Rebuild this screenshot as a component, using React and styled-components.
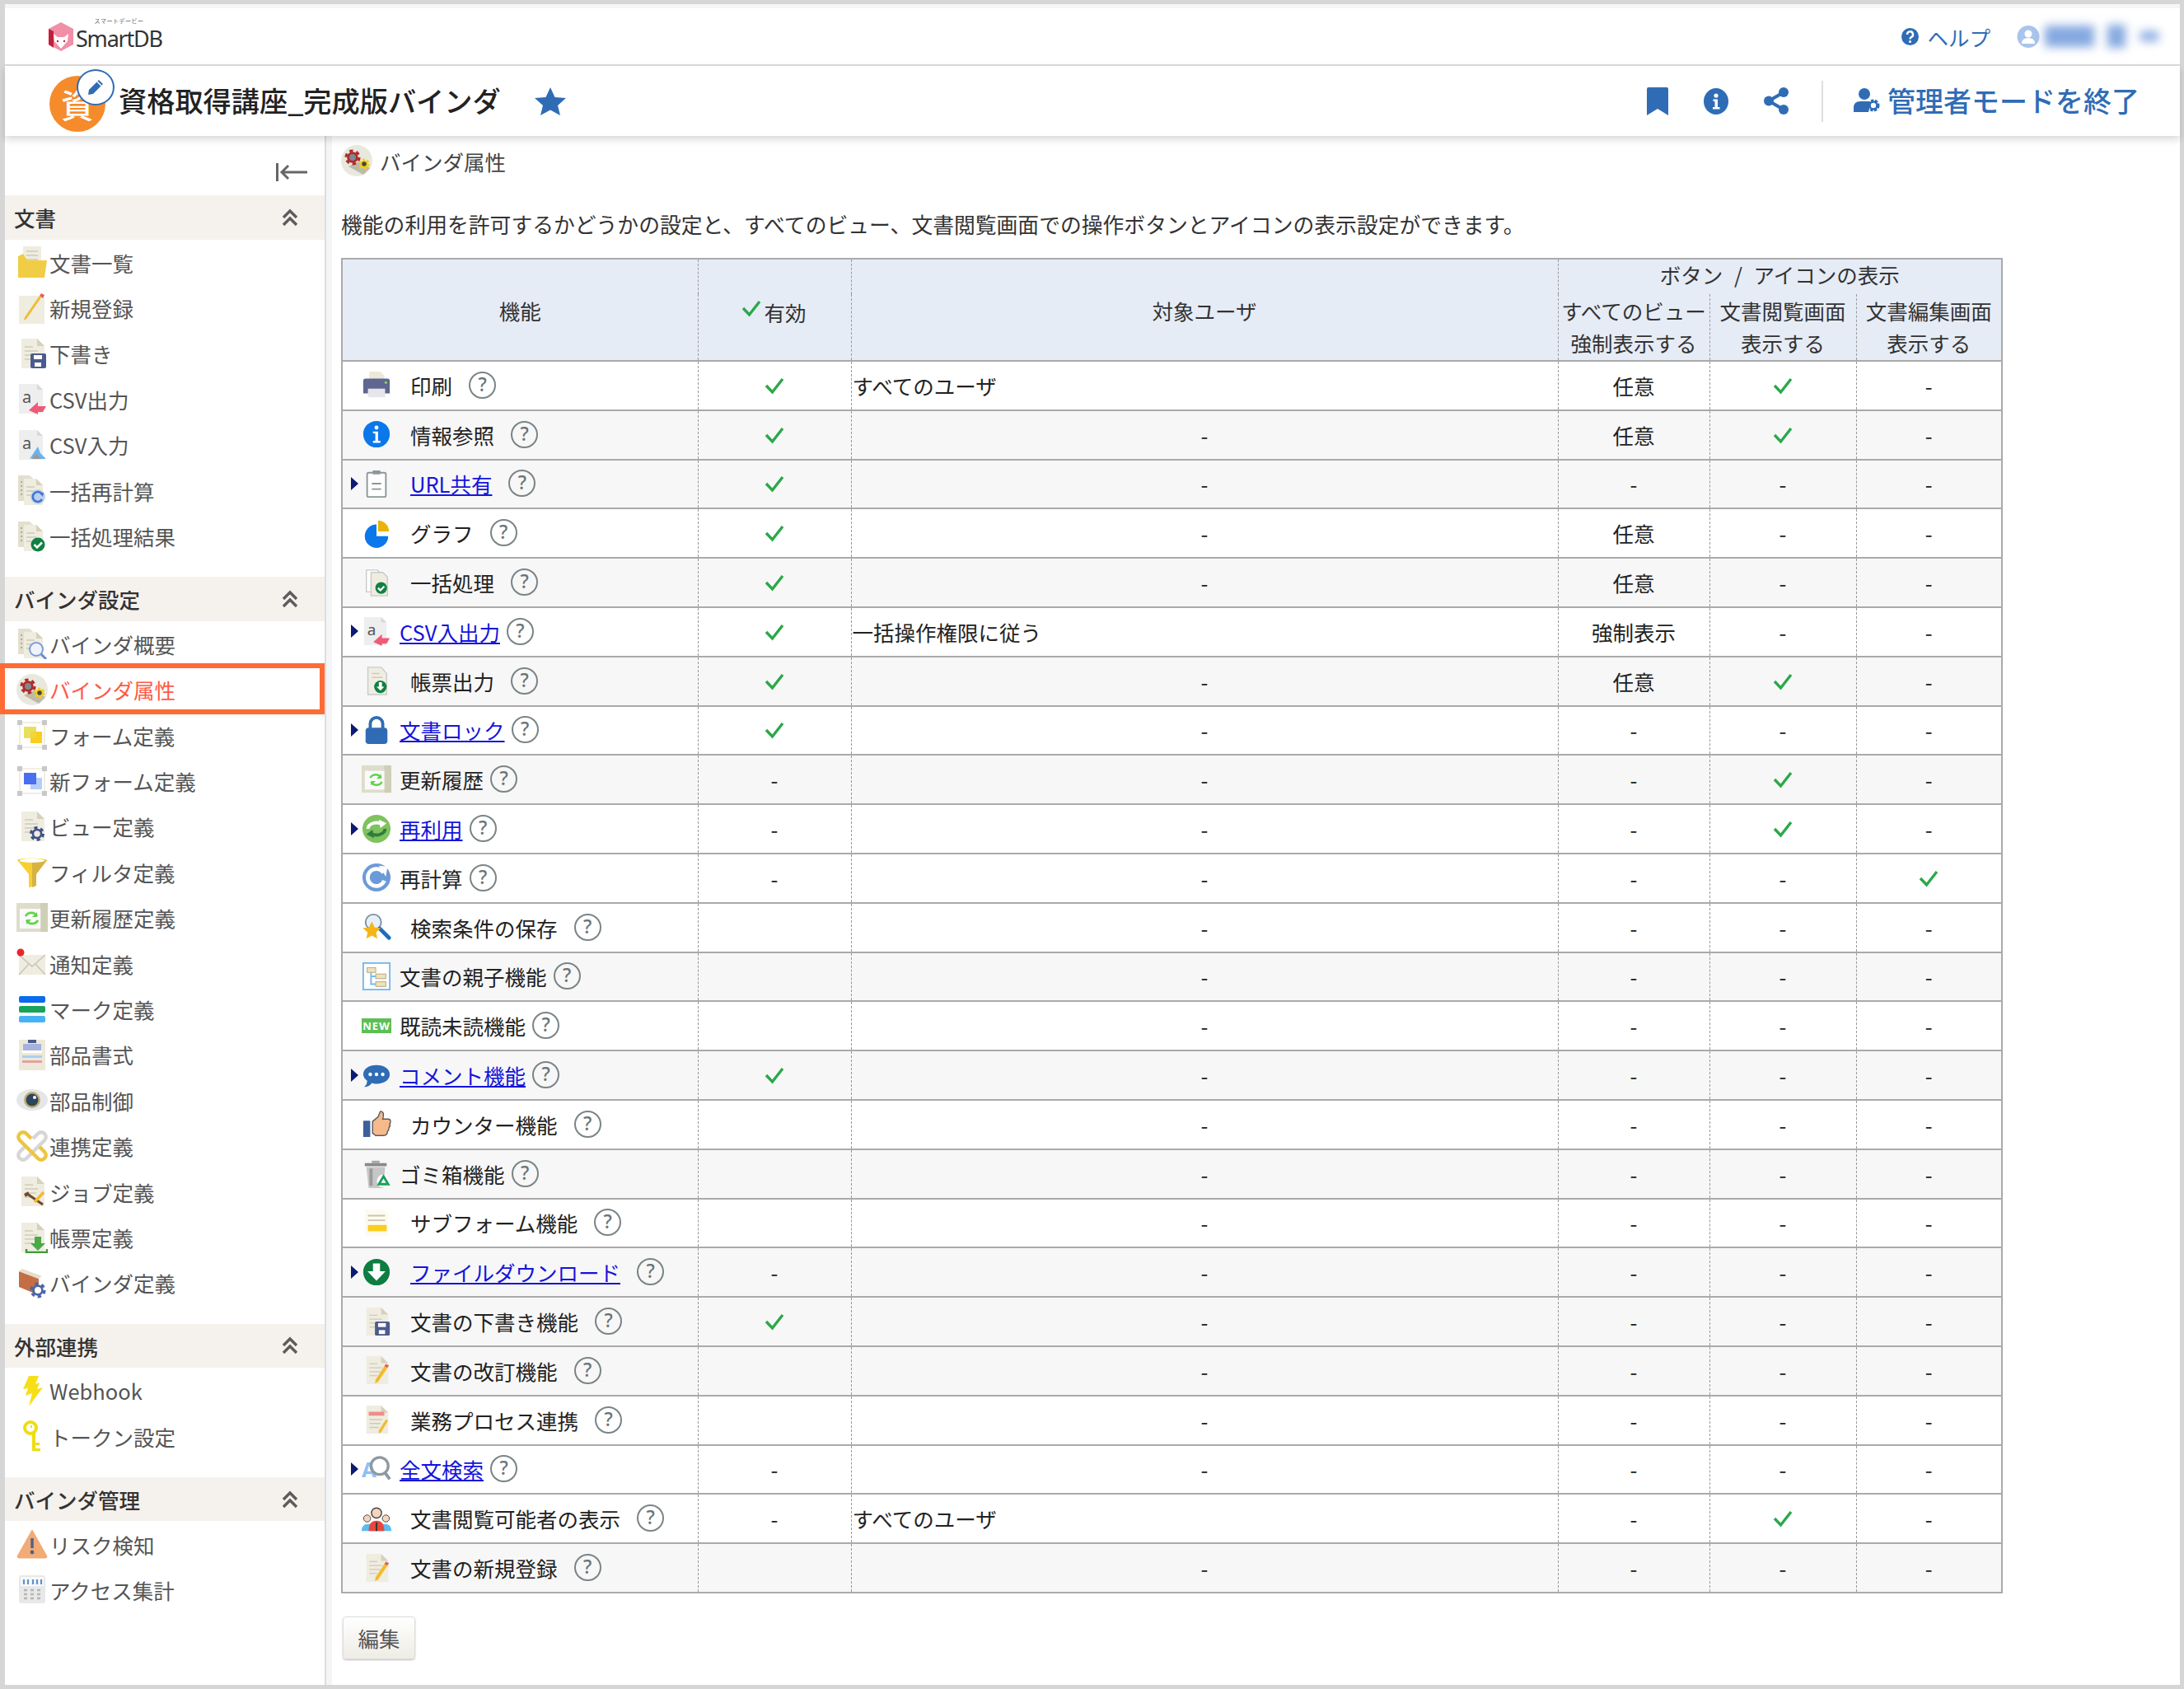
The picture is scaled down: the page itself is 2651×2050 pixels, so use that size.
import React from "react";
import styled, { createGlobalStyle } from "styled-components";

const Global = createGlobalStyle`
  html, body { margin: 0; padding: 0; background: #d6d6d6; }
  * { box-sizing: border-box; }
  body { font-family: "Noto Sans CJK JP", "Noto Sans", sans-serif; font-size: 25.5px; color: #222; }
`;

const Page = styled.div`
  width: 2651px; height: 2050px; padding: 5px 5px 5px 6px; background: #d6d6d6;
  display: flex; overflow: hidden;
`;
const Frame = styled.div`
  flex: 1; min-width: 0; background: #fff; display: flex; flex-direction: column;
`;
const TopBar = styled.header`
  height: 75px; flex: none; display: flex; align-items: center; padding: 0 26px 0 52px;
  border-top: 5px solid #f6f6f6; border-bottom: 2px solid #dcdcdc; background: #fff;
`;
const Logo = styled.div`display: flex; align-items: center; gap: 2px;`;
const LogoWords = styled.div`display: flex; flex-direction: column; align-items: center; gap: 3px; margin-top: -8px;`;
const LogoKana = styled.span`font-size: 7px; line-height: 10px; color: #666; letter-spacing: 0.5px;`;
const LogoName = styled.span`font-family: "Noto Sans", sans-serif; font-size: 27px; line-height: 28px; height: 28px; letter-spacing: -1.2px; color: #333;`;
const TopRight = styled.div`margin-left: auto; display: flex; align-items: center;`;
const Help = styled.a`display: flex; align-items: center; gap: 10px; color: #2f6cb5; margin-right: 32px;`;
const BlurName = styled.div`display: flex; align-items: center; margin-left: 6px; filter: blur(6px);`;
const BlurBlock = styled.span`
  display: block; height: ${(p) => p.$h}px; width: ${(p) => p.$w}px; margin-right: ${(p) => p.$gap}px; background: #84a8e0;
`;
const AppBar = styled.div`
  height: 85px; flex: none; display: flex; align-items: center; padding: 0 49px 0 54px; background: #fff;
  box-shadow: 0 4px 9px rgba(0, 0, 0, 0.16); position: relative; z-index: 2;
`;
const Avatar = styled.div`
  width: 68px; height: 68px; margin-top: 6px; border-radius: 50%; background: #f68b2c; color: #fff; position: relative; flex: none;
  display: flex; align-items: center; justify-content: center; font-size: 40px; font-weight: 500; line-height: 1;
`;
const PenBadge = styled.span`
  position: absolute; left: 33px; top: -8px; width: 46px; height: 44px; border-radius: 50%; background: #fff; border: 2.5px solid #2f6cb5;
  display: flex; align-items: center; justify-content: center;
`;
const Title = styled.h1`margin: -3px 0 0 16px; font-size: 34.2px; font-weight: 500; color: #222; white-space: nowrap;`;
const StarWrap = styled.span`margin-left: 41px; display: flex;`;
const Tools = styled.div`margin-left: auto; display: flex; align-items: center; gap: 43px;`;
const ToolDivider = styled.span`width: 2px; height: 50px; background: #dedede; margin: 0 -6px 0 -3px;`;
const AdminLink = styled.a`display: flex; align-items: center; gap: 9px; margin-top: -3px; font-size: 34px; font-weight: 500; color: #2f6cb5; white-space: nowrap;`;

const Body = styled.div`flex: 1; min-height: 0; display: flex;`;
const Sidebar = styled.nav`
  width: 390px; flex: none; padding-top: 11px; border-right: 2px solid #ddd; background: #fff; background-clip: padding-box;
`;
const CollapseRow = styled.div`height: 61px; display: flex; align-items: flex-start; justify-content: flex-end; padding: 22px 21px 0 0;`;
const Section = styled.section`margin-bottom: 22px;`;
const SectionHead = styled.h2`
  margin: 0; height: 53.5px; padding: 0 32px 0 11px; background: #f5f1ed; display: flex; align-items: center; justify-content: space-between;
  font-size: 25.5px; font-weight: 500; color: #333;
`;
const Item = styled.a`
  height: 55.4px; padding-left: 11px; display: flex; align-items: center; color: ${(p) => (p.$active ? "#ff5a45" : "#555")};
  position: relative; white-space: nowrap;
  ${(p) => p.$active && `
    &::after { content: ""; position: absolute; left: -6px; right: 0; top: -4px; bottom: -2px; border: 6px solid #ff6b35; pointer-events: none; }
  `}
`;
const ItemIcon = styled.span`width: 43px; height: 40px; flex: none; display: flex; align-items: center; justify-content: center;`;
const Strip = styled.div`width: 7px; flex: none; background: #f4f5f7;`;
const Main = styled.main`flex: 1; min-width: 0; padding: 11px 0 0 11px;`;
const Heading = styled.div`display: flex; align-items: center; gap: 9px; height: 38px; color: #444;`;
const Description = styled.p`margin: 38px 0 0; font-size: 25.8px; line-height: 40px; height: 40px; color: #333; white-space: nowrap;`;
const Table = styled.table`
  margin: 21px 0 0; width: 2015px; table-layout: fixed; border-collapse: collapse; border: 2px solid #aaa;
`;
const Th = styled.th`
  background: #e6ecf6; font-weight: 400; color: #333; padding: 0; text-align: center; border-left: 1px dashed #999;
  border-bottom: ${(p) => (p.$open ? "none" : "2px solid #aaa")};
  line-height: 39px; height: ${(p) => p.$h || 40}px; white-space: nowrap; vertical-align: middle;
  &:first-child { border-left: none; }
`;
const ButtonsTitle = styled.span`word-spacing: 8px; position: relative; top: -4px;`;
const SubHead = styled(Th)`border-left: 1px dashed #999 !important; padding-bottom: 2px;`;
const ValidMark = styled.span`display: inline-flex; align-items: center; gap: 3px; margin-left: -1px;`;
const ValidCheck = styled.span`display: flex; margin-top: -9px;`;
const Row = styled.tr`background: ${(p) => (p.$shade ? "#f7f7f7" : "#fff")}; height: 59.8px; border-bottom: 2px solid #aaa;`;
const Td = styled.td`
  padding: 0 ${(p) => (p.$left ? "1px" : "0")} 1px; text-align: ${(p) => (p.$left ? "left" : "center")}; border-left: 1px dashed #999; color: #222;
  white-space: nowrap; vertical-align: middle;
  &:first-child { border-left: none; }
`;
const FeatureCell = styled.div`display: flex; align-items: center; padding-left: 10px;`;
const ArrowSlot = styled.span`width: 12px; height: 16px; flex: none; display: flex; align-items: center;`;
const FeatureIcon = styled.span`width: 38px; height: 38px; flex: none; display: flex; align-items: center; justify-content: center;`;
const FeatureName = styled.span`margin-left: ${(p) => (p.$wide ? "22px" : "9px")}; color: #222;`;
const FeatureLink = styled.a`margin-left: ${(p) => (p.$wide ? "22px" : "9px")}; color: #1414dc; text-decoration: underline;`;
const HelpMark = styled.span`
  width: 33px; height: 33px; flex: none; margin-left: ${(p) => (p.$wide ? "20px" : "8px")}; border-radius: 50%; border: 2.5px solid #7a8486; color: #6a7476;
  font-family: "Noto Sans", sans-serif; font-size: 23px; font-weight: 500; line-height: 27px; text-align: center;
`;
const EditButton = styled.button`
  display: block; margin: 28px 0 0 2px; width: 88px; height: 52px; padding: 0; font: inherit; color: #555; border: 1px solid #ddd; border-radius: 4px;
  background: linear-gradient(#fff, #eeece4); box-shadow: 0 1px 2px rgba(0, 0, 0, 0.25);
`;

/* ---------- drawings ---------- */
const Svg = ({ s = 38, w, h, vb = "0 0 38 38", children }) => (
  <svg width={w || s} height={h || s} viewBox={vb} aria-hidden="true">{children}</svg>
);
const Paper = ({ lines = true }) => (
  <>
    <path d="M6 1h19l9 9v27H6z" fill="#efece0" />
    <path d="M25 1l9 9h-9z" fill="#d5d1bd" />
    {lines && <path d="M10 11h10M10 16h16M10 21h14M10 26h10" stroke="#cfcbb8" strokeWidth="1.4" />}
  </>
);
const TwoPapers = () => (
  <>
    <path d="M2 1h14l7 7v24H2z" fill="#e2dfce" />
    <path d="M9 5h15l8 8v24H9z" fill="#efece0" />
    <path d="M24 5l8 8h-8z" fill="#d5d1bd" />
    <path d="M5 9h2M5 14h2M5 19h2M5 24h2" stroke="#9d9a88" strokeWidth="1.6" />
    <path d="M12 15h10M12 20h12M12 25h6" stroke="#cfcbb8" strokeWidth="1.4" />
  </>
);
const GearShape = ({ x, y, r, c, hole = "#fff" }) => (
  <g>
    <circle cx={x} cy={y} r={r} fill="none" stroke={c} strokeWidth={r * 0.4} strokeDasharray={`${r * 0.55} ${r * 0.5}`} />
    <circle cx={x} cy={y} r={r * 0.85} fill={c} />
    <circle cx={x} cy={y} r={r * 0.5} fill={hole} />
  </g>
);
const I = {
  listDoc: (s) => <Svg s={s}><path d="M8 0h22v24H8z" fill="#efece0" /><path d="M12 6h14M12 11h14M12 16h14" stroke="#cfcbb8" strokeWidth="1.5" /><path d="M2 12l6-3 5 8h24l-3 21H2z" fill="#f0cd45" /></Svg>,
  newDoc: (s) => <Svg s={s}><path d="M3 4h31v34H3z" fill="#efece0" /><path d="M30 6L12 32l-3 2 1-4L28 4z" fill="#f2bb2c" /><path d="M28 4l2-3 4 2-2 4z" fill="#ef5a5a" /></Svg>,
  draft: (s) => <Svg s={s}><Paper /><rect x="17" y="19" width="19" height="18" rx="2" fill="#4b5b8e" /><rect x="21" y="21" width="10" height="5" fill="#fff" /><rect x="22" y="30" width="8" height="5" fill="#fff" /></Svg>,
  csvOut: (s) => <Svg s={s}><path d="M3 1h22l7 7v29H3z" fill="#eeeeee" /><path d="M25 1l7 7h-7z" fill="#d8d8d8" /><text x="7" y="24" fontSize="20" fill="#555" fontFamily="Noto Sans">a</text><path d="M15 33l11-10v5h10l-4 7h-6v3z" fill="#ee5b78" /></Svg>,
  csvIn: (s) => <Svg s={s}><path d="M3 1h22l7 7v29H3z" fill="#eeeeee" /><path d="M25 1l7 7h-7z" fill="#d8d8d8" /><text x="7" y="24" fontSize="20" fill="#555" fontFamily="Noto Sans">a</text><path d="M36 36H24l-3-2-5 2 10-15 3 8z" fill="#69b3ef" /><path d="M18 36l6-6 6 6z" fill="#999" /></Svg>,
  recalcDocs: (s) => <Svg s={s}><TwoPapers /><circle cx="26" cy="27" r="9" fill="#bcd0ee" /><path d="M31 24a6 6 0 1 0 0 6" fill="none" stroke="#3f76d2" strokeWidth="2.6" /><path d="M28 22l5 0-1 5z" fill="#3f76d2" /></Svg>,
  batch: (s) => <Svg s={s}><TwoPapers /><circle cx="26" cy="29" r="8.5" fill="#118043" /><path d="M21.5 29l3.5 3.5 6-6" fill="none" stroke="#fff" strokeWidth="2.6" /></Svg>,
  overview: (s) => <Svg s={s}><TwoPapers /><circle cx="24" cy="26" r="8" fill="#eef3fb" stroke="#7d9bd8" strokeWidth="2" /><path d="M30 32l6 6" stroke="#6d8bcf" strokeWidth="3" /></Svg>,
  gears: (s) => <Svg s={s}><circle cx="19" cy="19" r="19" fill="#e9e8de" /><path d="M9 26l18 10 8-8-14-8z" fill="#bdbba8" /><GearShape x={14} y={15} r={8} c="#b02a2a" hole="#7f8791" /><GearShape x={28} y={23} r={5.5} c="#f2d018" hole="#444" /></Svg>,
  form: (s) => <Svg s={s}><path d="M4 4h30v30H4z" fill="none" stroke="#f2eee2" strokeWidth="2" /><path d="M1 1h6v6H1zM31 1h6v6h-6zM1 31h6v6H1zM31 31h6v6h-6z" fill="#c8c8c8" /><path d="M9 9h15v14H9z" fill="#e8e05a" /><path d="M17 15h14v14H17z" fill="#fbcd1d" /><path d="M17 15h7v8h-7z" fill="#efd63a" /></Svg>,
  newForm: (s) => <Svg s={s}><path d="M4 4h30v30H4z" fill="none" stroke="#f2eee2" strokeWidth="2" /><path d="M1 1h6v6H1zM31 1h6v6h-6zM1 31h6v6H1zM31 31h6v6h-6z" fill="#c8c8c8" /><path d="M17 15h14v14H17z" fill="#b6cdf7" /><path d="M9 9h15v14H9z" fill="#4a6ef0" /></Svg>,
  view: (s) => <Svg s={s}><Paper /><GearShape x={25} y={28} r={7.5} c="#3f5286" hole="#efece0" /></Svg>,
  filter: (s) => <Svg s={s}><path d="M1 5c0-3 36-3 36 0L24 22v14l-9 2V22z" fill="#f8cf2e" /><path d="M19 8l18-3L24 22v14l-5 2z" fill="#d7b23f" /><ellipse cx="19" cy="5.5" rx="15" ry="2.6" fill="#fff" /></Svg>,
  history: (s) => <Svg s={s}><rect x="0" y="1" width="38" height="35" fill="#dedccb" /><rect x="4" y="8" width="26" height="24" fill="#fafafa" /><path d="M29 1h9v35h-9z" fill="#c9c7ae" opacity=".7" /><path d="M11 17a8 8 0 0 1 14 0M26 22a8 8 0 0 1-14 0" fill="none" stroke="#62d24a" strokeWidth="2.6" /><path d="M25 12v6h-6zM12 27v-6h6z" fill="#62d24a" /></Svg>,
  notify: (s) => <Svg s={s}><path d="M3 9h32v24H3z" fill="#efece0" /><path d="M3 9l16 14L35 9M3 33l12-13M35 33L23 20" fill="none" stroke="#c8c4b0" strokeWidth="1.4" /><circle cx="5" cy="6" r="4.5" fill="#e6262c" /></Svg>,
  mark: (s) => <Svg s={s}><rect x="3" y="3" width="32" height="8" rx="2" fill="#0a6bef" /><rect x="3" y="15" width="32" height="8" rx="2" fill="#17a35c" /><rect x="3" y="27" width="32" height="8" rx="2" fill="#47b3f5" /></Svg>,
  clipDoc: (s) => <Svg s={s}><path d="M3 1h32v37H3z" fill="#ece9da" /><path d="M8 6h22v8H8z" fill="#a6b2dd" /><path d="M14 1h10v4H14z" fill="#4b5b8e" /><path d="M7 14h24v3H7z" fill="#fff" /><path d="M7 20h24v3H7z" fill="#a9cfee" /><path d="M7 26h24v3H7z" fill="#e7a0a0" /></Svg>,
  eye: (s) => <Svg s={s}><ellipse cx="19" cy="19" rx="19" ry="13" fill="#e3e7ea" /><circle cx="19" cy="19" r="10" fill="#c7a96c" /><circle cx="19" cy="19" r="7.5" fill="#27485e" /><circle cx="22" cy="16" r="2" fill="#fff" /></Svg>,
  chain: (s) => <Svg s={s}><path d="M20 10l6-6a5.500 5.500 0 0 1 8 8L12 34a5.500 5.500 0 0 1-8-8l6-6" fill="none" stroke="#d6d6d6" strokeWidth="4.500" /><path d="M18 10l-6-6a5.500 5.500 0 0 0-8 8l22 22a5.500 5.500 0 0 0 8-8l-6-6" fill="none" stroke="#ecc640" strokeWidth="4.500" /></Svg>,
  job: (s) => <Svg s={s}><Paper /><path d="M13 22l19 13" stroke="#6e4a2c" strokeWidth="3" /><path d="M33 20L22 32" stroke="#f2bb2c" strokeWidth="3.5" /><path d="M10 24l5-3" stroke="#6e4a2c" strokeWidth="4" /></Svg>,
  report: (s) => <Svg s={s}><Paper /><path d="M22 18h8v8h5l-9 9-9-9h5z" fill="#4caa46" /><path d="M12 33v4h25v-4" fill="none" stroke="#3d9a3c" strokeWidth="2.5" /></Svg>,
  binder: (s) => <Svg s={s}><path d="M3 5l24 9v20L3 24z" fill="#c46e45" /><path d="M3 5l4-3 24 9-4 3z" fill="#e6dccb" /><GearShape x={26} y={28} r={8} c="#4866a8" hole="#fff" /></Svg>,
  bolt: (s) => <Svg s={s}><path d="M15 1h12l-4 10 5-2-3 8 7-2L15 38l4-16-8 3 3-9-6 1z" fill="#f6df16" /></Svg>,
  key: (s) => <Svg s={s}><circle cx="17" cy="9" r="7" fill="none" stroke="#f0dc10" strokeWidth="4" /><path d="M17 6h2v3h-2z" fill="#f0dc10" /><path d="M15 15h4v22h10v-3h-6v-4h5v-3h-5v-12z" fill="#f0dc10" /></Svg>,
  warn: (s) => <Svg s={s}><path d="M19 2l18 32a2 2 0 0 1-2 2H3a2 2 0 0 1-2-2z" fill="#f2ab75" stroke="#f2ab75" strokeLinejoin="round" /><path d="M19 12v12" stroke="#51608f" strokeWidth="3.5" /><circle cx="19" cy="29" r="2.4" fill="#51608f" /></Svg>,
  calc: (s) => <Svg s={s}><rect x="3" y="2" width="32" height="34" rx="3" fill="#e8e8e8" /><rect x="5" y="4" width="28" height="11" fill="#f8f8f8" /><path d="M9 7v6M14 7v6M20 7v6M25 7v6M30 7v6" stroke="#5b93cf" strokeWidth="2.2" /><path d="M9 20h4M17 20h4M25 20h4M9 25h4M17 25h4M25 25h4M9 30h4M17 30h4M25 30h4" stroke="#b5b5b5" strokeWidth="2.4" /></Svg>,
  printer: (s) => <Svg s={s}><path d="M10 2h14l5 5v9H9z" fill="#ece9da" /><path d="M2 14q0-3 3-3h28q3 0 3 3v16H2z" fill="#5f6690" /><path d="M8 24h22v11H8z" fill="#e6e6ea" /><circle cx="31" cy="16" r="1.6" fill="#8de04a" /></Svg>,
  info: (s) => <Svg s={s}><circle cx="19" cy="19" r="17" fill="#0a78ea" /><circle cx="19" cy="10.5" r="2.6" fill="#fff" /><path d="M14.5 15.5h6.5v12h3v2.5H14.5v-2.5h3v-9.5h-3z" fill="#fff" /></Svg>,
  clipLine: (s) => <Svg s={s}><rect x="7" y="5" width="24" height="31" rx="2" fill="#fff" stroke="#8d9698" strokeWidth="2" /><rect x="14" y="2" width="10" height="5" rx="1" fill="#8d9698" /><path d="M13 19h12M13 26h12" stroke="#8d9698" strokeWidth="2" /></Svg>,
  pie: (s) => <Svg s={s}><path d="M19 8a15 15 0 1 0 15 15H19z" fill="#0a78ea" /><path d="M21 3a14 14 0 0 1 14 14H21z" fill="#eab308" /></Svg>,
  batchSmall: (s) => <Svg s={s}><path d="M6 3h14l3 3v25H6z" fill="#fff" stroke="#c9cacb" strokeWidth="1.5" /><path d="M12 6h15l6 6v24H12z" fill="#efece0" stroke="#c9cacb" strokeWidth="1.5" /><circle cx="25" cy="26" r="7.5" fill="#118043" /><path d="M21 26l3 3 5-5" fill="none" stroke="#fff" strokeWidth="2.4" /></Svg>,
  reportSmall: (s) => <Svg s={s}><path d="M8 2h17l7 8v27H8z" fill="#f0eee2" stroke="#c9cacb" strokeWidth="1.5" /><path d="M13 10h10M13 15h14" stroke="#cfcbb8" strokeWidth="1.5" /><circle cx="24" cy="27" r="8" fill="#118043" /><path d="M22 21h4v6h3l-5 5-5-5h3z" fill="#fff" /></Svg>,
  lock: (s) => <Svg s={s}><path d="M11 18v-7a8 8 0 0 1 16 0v7" fill="none" stroke="#2f6cb5" strokeWidth="4" /><rect x="5" y="16" width="28" height="21" rx="4" fill="#2f6cb5" /></Svg>,
  reuse: (s) => <Svg s={s}><circle cx="19" cy="19" r="18" fill="#7fc25e" /><path d="M8 19a11 8 0 0 1 18-6" fill="none" stroke="#fff" strokeWidth="4" /><path d="M22 7l10 5-8 6z" fill="#fff" /><path d="M30 19a11 8 0 0 1-18 6" fill="none" stroke="#2e7c3f" strokeWidth="4" /><path d="M16 31L6 26l8-6z" fill="#2e7c3f" /></Svg>,
  recalc: (s) => <Svg s={s}><circle cx="19" cy="19" r="18" fill="#6b9ad8" /><path d="M28 13a11 11 0 1 0 1 10" fill="none" stroke="#fff" strokeWidth="5" /><path d="M22 4l11 1-2 13z" fill="#fff" /></Svg>,
  searchStar: (s) => <Svg s={s}><circle cx="15" cy="13" r="10" fill="#e6f0fb" stroke="#7f8f9c" strokeWidth="2" /><path d="M23 21l12 12" stroke="#1f6dc2" strokeWidth="5" strokeLinecap="round" /><path d="M13 12l3.5 7.5 8 1-6 5.500 1.500 8-7-4-7 4 1.500-8-6-5.500 8-1z" fill="#f6b516" /></Svg>,
  tree: (s) => <Svg s={s}><rect x="2" y="2" width="34" height="34" fill="#fff" stroke="#78b8ee" strokeWidth="2" /><rect x="7" y="8" width="11" height="6" fill="#ece3bc" stroke="#b3a877" /><rect x="18" y="16" width="13" height="6" fill="#ece3bc" stroke="#b3a877" /><rect x="18" y="26" width="13" height="6" fill="#ece3bc" stroke="#b3a877" /><path d="M12 14v15h6M12 19h6" fill="none" stroke="#78b8ee" strokeWidth="2" /></Svg>,
  newMark: () => <svg width="36" height="18" viewBox="0 0 36 18" aria-hidden="true"><rect width="36" height="18" fill="#5cbf56" /><text x="18" y="14" textAnchor="middle" fontSize="13" fontWeight="700" fill="#fff" fontFamily="Noto Sans" letterSpacing="1">NEW</text></svg>,
  comment: (s) => <Svg s={s}><path d="M19 6c10 0 17 5 17 12s-7 12-17 12c-2 0-4 0-6-1-2 3-5 5-10 5 3-2 4-5 4-8-3-2-5-5-5-8C2 11 9 6 19 6z" fill="#2f6cb5" /><circle cx="11" cy="18" r="2.3" fill="#fff" /><circle cx="19" cy="18" r="2.3" fill="#fff" /><circle cx="27" cy="18" r="2.3" fill="#fff" /></Svg>,
  thumb: (s) => <Svg s={s}><rect x="2" y="15" width="9" height="21" rx="1" fill="#3f5f9a" /><path d="M14 16l7-6 3-7c4 0 5 4 3 10h7c4 0 3 5 2 6 1 3 0 4-1 5 0 3-1 4-2 5 0 3-2 5-5 5H18l-4-3z" fill="#f6b98b" stroke="#5a5a5a" strokeWidth="1.5" /></Svg>,
  trash: (s) => <Svg s={s}><path d="M4 6h28v4H4z" fill="#8a8a8a" /><path d="M13 3h10v3H13z" fill="#a5a5a5" /><path d="M6 11h24l-2 27H9z" fill="#c6c6c6" /><path d="M12 13v22" stroke="#9a9a9a" strokeWidth="4" /><circle cx="28" cy="29" r="8.5" fill="#fff" /><path d="M28 23l6 10H22z" fill="none" stroke="#1ba05a" strokeWidth="3" /></Svg>,
  subform: (s) => <Svg s={s}><path d="M4 2h24l6 6v28H4z" fill="#fdfaef" /><path d="M8 10h22M8 16h22" stroke="#c9c5ae" strokeWidth="2" /><path d="M8 22h24v8H8z" fill="#fbcd1d" /></Svg>,
  down: (s) => <Svg s={s}><circle cx="19" cy="19" r="17" fill="#0e7d42" /><path d="M14.500 8h9v10h7L19 30 7.500 18h7z" fill="#fff" /></Svg>,
  revise: (s) => <Svg s={s}><Paper /><path d="M33 16L21 34l-4 2 1-5 11-17z" fill="#f2bb2c" /><path d="M29 14l2-3 4 2-2 3z" fill="#ef5a5a" /></Svg>,
  bpm: (s) => <Svg s={s}><Paper lines={false} /><path d="M9 9h20v5H9z" fill="#ef8d8d" /><path d="M10 19h16M10 24h14M10 29h12" stroke="#cfcbb8" strokeWidth="1.5" /><path d="M34 20L25 35l-3 2 0-4 9-14z" fill="#f2bb2c" /></Svg>,
  fulltext: (s) => <Svg s={s}><text x="0" y="30" fontSize="27" fontWeight="700" fill="#8cc0f5" fontFamily="Noto Sans">A</text><circle cx="23" cy="15" r="11" fill="none" stroke="#8d9aa0" strokeWidth="3.500" /><path d="M30 24l6 8" stroke="#8d9aa0" strokeWidth="4" /></Svg>,
  people: (s) => <Svg s={s}><circle cx="19" cy="12" r="6.500" fill="#f7d3bd" stroke="#444" strokeWidth="1.500" /><path d="M0 35q0-9 8-9h22q8 0 8 9z" fill="#5dbbef" /><circle cx="7" cy="19" r="4.500" fill="#f7d3bd" stroke="#444" /><circle cx="31" cy="19" r="4.500" fill="#f7d3bd" stroke="#444" /><path d="M9 35q0-13 10-13t10 13z" fill="#e8483b" /><path d="M18 24h2v11h-2z" fill="#333" /></Svg>,
};

const Check = ({ w = 24, h = 22 }) => (
  <svg width={w} height={h} viewBox="0 0 24 22" aria-hidden="true">
    <path d="M2 11l7.500 8L22 3" fill="none" stroke="#2ba84a" strokeWidth="3.400" />
  </svg>
);
const DoubleChevron = () => (
  <svg width="20" height="24" viewBox="0 0 20 24" aria-hidden="true">
    <path d="M2 12l8-8 8 8M2 21l8-8 8 8" fill="none" stroke="#5c5c5c" strokeWidth="3.400" />
  </svg>
);
const CollapseIcon = () => (
  <svg width="38" height="22" viewBox="0 0 38 22" aria-hidden="true">
    <path d="M1.500 0v22M38 11H7M15 3l-8 8 8 8" fill="none" stroke="#666" strokeWidth="3" />
  </svg>
);
const Triangle = () => (
  <svg width="9" height="16" viewBox="0 0 9 16" aria-hidden="true"><path d="M0 0l9 8-9 8z" fill="#0d1a73" /></svg>
);
const LogoMark = () => (
  <svg width="32" height="35" viewBox="0 0 32 35" aria-hidden="true">
    <path d="M16 0l15 8v19l-15 8-15-8V8z" fill="#f08fa6" />
    <path d="M1 8l6 3v20l-6-4z" fill="#c21f3d" />
    <path d="M7 14l5 4h8l5-4-1 9-8 9-8-9z" fill="#fff" />
    <circle cx="12" cy="23" r="1.200" fill="#c21f3d" /><circle cx="20" cy="23" r="1.200" fill="#c21f3d" />
  </svg>
);
const HelpIcon = () => (
  <svg width="21" height="21" viewBox="0 0 21 21" aria-hidden="true">
    <circle cx="10.500" cy="10.500" r="10.500" fill="#2f6cb5" />
    <path d="M7 8a3.500 3.500 0 1 1 5 3c-1 .7-1.500 1-1.500 2.500" fill="none" stroke="#fff" strokeWidth="2.400" />
    <circle cx="10.500" cy="16.500" r="1.500" fill="#fff" />
  </svg>
);
const UserIcon = () => (
  <svg width="28" height="27" viewBox="0 0 28 27" aria-hidden="true">
    <circle cx="14" cy="13.500" r="13.500" fill="#a9c4ec" />
    <circle cx="14" cy="10" r="4.500" fill="#fff" /><path d="M6 22q0-7 8-7t8 7z" fill="#fff" />
  </svg>
);
const PenIcon = () => (
  <svg width="24" height="24" viewBox="0 0 24 24" aria-hidden="true">
    <path d="M16 3l5 5L9 20l-6 1 1-6z" fill="#2f6cb5" /><path d="M14 5l5 5" stroke="#fff" strokeWidth="1.500" />
  </svg>
);
const StarIcon = () => (
  <svg width="38" height="34" viewBox="0 0 38 34" aria-hidden="true">
    <path d="M19 0l5.500 12L38 13l-10 9 3 12-12-6.500L7 34l3-12L0 13l13.500-1z" fill="#2f6cb5" />
  </svg>
);
const BookmarkIcon = () => (
  <svg width="26" height="34" viewBox="0 0 26 34" aria-hidden="true"><path d="M0 2q0-2 2-2h22q2 0 2 2v32L13 26 0 34z" fill="#2f6cb5" /></svg>
);
const InfoIcon = () => (
  <svg width="30" height="32" viewBox="0 0 30 32" aria-hidden="true">
    <ellipse cx="15" cy="16" rx="15" ry="16" fill="#2f6cb5" /><circle cx="15" cy="9" r="2.600" fill="#fff" /><path d="M11.500 13.500H17V23h2.500v2.500H11V23h2.500v-7h-2z" fill="#fff" />
  </svg>
);
const ShareIcon = () => (
  <svg width="30" height="33" viewBox="0 0 30 33" aria-hidden="true">
    <path d="M24 6L6 16.500 24 27" fill="none" stroke="#2f6cb5" strokeWidth="4" />
    <circle cx="24" cy="6" r="6" fill="#2f6cb5" /><circle cx="6" cy="16.500" r="6" fill="#2f6cb5" /><circle cx="24" cy="27" r="6" fill="#2f6cb5" />
  </svg>
);
const AdminIcon = () => (
  <svg width="32" height="29" viewBox="0 0 32 29" aria-hidden="true">
    <circle cx="13" cy="7" r="7" fill="#2f6cb5" /><path d="M0 29v-5q0-8 8-8h9q3 0 4 1l-3 12z" fill="#2f6cb5" />
    <circle cx="24" cy="21" r="5.500" fill="none" stroke="#2f6cb5" strokeWidth="4" strokeDasharray="3 1.500" />
    <circle cx="24" cy="21" r="4.500" fill="none" stroke="#2f6cb5" strokeWidth="2.500" />
  </svg>
);

/* ---------- data ---------- */
const sections = [
  { title: "文書", items: [["listDoc", "文書一覧"], ["newDoc", "新規登録"], ["draft", "下書き"], ["csvOut", "CSV出力"], ["csvIn", "CSV入力"], ["recalcDocs", "一括再計算"], ["batch", "一括処理結果"]] },
  { title: "バインダ設定", items: [["overview", "バインダ概要"], ["gears", "バインダ属性", true], ["form", "フォーム定義"], ["newForm", "新フォーム定義"], ["view", "ビュー定義"], ["filter", "フィルタ定義"], ["history", "更新履歴定義"], ["notify", "通知定義"], ["mark", "マーク定義"], ["clipDoc", "部品書式"], ["eye", "部品制御"], ["chain", "連携定義"], ["job", "ジョブ定義"], ["report", "帳票定義"], ["binder", "バインダ定義"]] },
  { title: "外部連携", items: [["bolt", "Webhook"], ["key", "トークン設定"]] },
  { title: "バインダ管理", items: [["warn", "リスク検知"], ["calc", "アクセス集計"]] },
];

const C = "check";
const rows = [
  { n: "印刷", i: "printer", w: 1, on: C, u: "すべてのユーザ", v: "任意", d: C, e: "-" },
  { n: "情報参照", i: "info", w: 1, s: 1, on: C, u: "-", v: "任意", d: C, e: "-" },
  { n: "URL共有", i: "clipLine", w: 1, s: 1, l: 1, on: C, u: "-", v: "-", d: "-", e: "-" },
  { n: "グラフ", i: "pie", w: 1, on: C, u: "-", v: "任意", d: "-", e: "-" },
  { n: "一括処理", i: "batchSmall", w: 1, s: 1, on: C, u: "-", v: "任意", d: "-", e: "-" },
  { n: "CSV入出力", i: "csvOut", l: 1, on: C, u: "一括操作権限に従う", v: "強制表示", d: "-", e: "-" },
  { n: "帳票出力", i: "reportSmall", w: 1, s: 1, on: C, u: "-", v: "任意", d: C, e: "-" },
  { n: "文書ロック", i: "lock", l: 1, on: C, u: "-", v: "-", d: "-", e: "-" },
  { n: "更新履歴", i: "history", s: 1, on: "-", u: "-", v: "-", d: C, e: "-" },
  { n: "再利用", i: "reuse", l: 1, on: "-", u: "-", v: "-", d: C, e: "-" },
  { n: "再計算", i: "recalc", on: "-", u: "-", v: "-", d: "-", e: C },
  { n: "検索条件の保存", i: "searchStar", w: 1, on: "", u: "-", v: "-", d: "-", e: "-" },
  { n: "文書の親子機能", i: "tree", s: 1, on: "", u: "-", v: "-", d: "-", e: "-" },
  { n: "既読未読機能", i: "newMark", on: "", u: "-", v: "-", d: "-", e: "-" },
  { n: "コメント機能", i: "comment", s: 1, l: 1, on: C, u: "-", v: "-", d: "-", e: "-" },
  { n: "カウンター機能", i: "thumb", w: 1, on: "", u: "-", v: "-", d: "-", e: "-" },
  { n: "ゴミ箱機能", i: "trash", s: 1, on: "", u: "-", v: "-", d: "-", e: "-" },
  { n: "サブフォーム機能", i: "subform", w: 1, on: "", u: "-", v: "-", d: "-", e: "-" },
  { n: "ファイルダウンロード", i: "down", w: 1, s: 1, l: 1, on: "-", u: "-", v: "-", d: "-", e: "-" },
  { n: "文書の下書き機能", i: "draft", w: 1, s: 1, on: C, u: "-", v: "-", d: "-", e: "-" },
  { n: "文書の改訂機能", i: "revise", w: 1, s: 1, on: "", u: "-", v: "-", d: "-", e: "-" },
  { n: "業務プロセス連携", i: "bpm", w: 1, on: "", u: "-", v: "-", d: "-", e: "-" },
  { n: "全文検索", i: "fulltext", l: 1, on: "-", u: "-", v: "-", d: "-", e: "-" },
  { n: "文書閲覧可能者の表示", i: "people", w: 1, on: "-", u: "すべてのユーザ", v: "-", d: C, e: "-" },
  { n: "文書の新規登録", i: "revise", w: 1, s: 1, on: "", u: "-", v: "-", d: "-", e: "-" },
];

const Val = ({ v }) => (v === C ? <Check /> : v);

export default function App() {
  return (
    <>
      <Global />
      <Page>
        <Frame>
          <TopBar>
            <Logo>
              <LogoMark />
              <LogoWords>
                <LogoKana>スマートデービー</LogoKana>
                <LogoName>SmartDB</LogoName>
              </LogoWords>
            </Logo>
            <TopRight>
              <Help><HelpIcon />ヘルプ</Help>
              <UserIcon />
              <BlurName>
                <BlurBlock $w={60} $h={26} $gap={16} />
                <BlurBlock $w={22} $h={28} $gap={18} />
                <BlurBlock $w={22} $h={12} $gap={0} />
              </BlurName>
            </TopRight>
          </TopBar>
          <AppBar>
            <Avatar>資<PenBadge><PenIcon /></PenBadge></Avatar>
            <Title>資格取得講座_完成版バインダ</Title>
            <StarWrap><StarIcon /></StarWrap>
            <Tools>
              <BookmarkIcon />
              <InfoIcon />
              <ShareIcon />
              <ToolDivider />
              <AdminLink><AdminIcon />管理者モードを終了</AdminLink>
            </Tools>
          </AppBar>
          <Body>
            <Sidebar>
              <CollapseRow><CollapseIcon /></CollapseRow>
              {sections.map((sec) => (
                <Section key={sec.title}>
                  <SectionHead>{sec.title}<DoubleChevron /></SectionHead>
                  {sec.items.map(([icon, label, active]) => (
                    <Item key={label} $active={active}>
                      <ItemIcon>{I[icon](38)}</ItemIcon>{label}
                    </Item>
                  ))}
                </Section>
              ))}
            </Sidebar>
            <Strip />
            <Main>
              <Heading>{I.gears(38)}バインダ属性</Heading>
              <Description>機能の利用を許可するかどうかの設定と、すべてのビュー、文書閲覧画面での操作ボタンとアイコンの表示設定ができます。</Description>
              <Table>
                <colgroup>
                  <col width="432" /><col width="186" /><col width="858" /><col width="184" /><col width="178" /><col width="177" />
                </colgroup>
                <thead>
                  <tr>
                    <Th rowSpan={2}>機能</Th>
                    <Th rowSpan={2}><ValidMark><ValidCheck><Check /></ValidCheck>有効</ValidMark></Th>
                    <Th rowSpan={2}>対象ユーザ</Th>
                    <Th colSpan={3} $h={43} $open><ButtonsTitle>ボタン / アイコンの表示</ButtonsTitle></Th>
                  </tr>
                  <tr>
                    <SubHead $h={80}>すべてのビュー<br />強制表示する</SubHead>
                    <SubHead $h={80}>文書閲覧画面<br />表示する</SubHead>
                    <SubHead $h={80}>文書編集画面<br />表示する</SubHead>
                  </tr>
                </thead>
                <tbody>
                  {rows.map((r) => (
                    <Row key={r.n} $shade={r.s}>
                      <Td>
                        <FeatureCell>
                          <ArrowSlot>{r.l && <Triangle />}</ArrowSlot>
                          <FeatureIcon>{I[r.i](36)}</FeatureIcon>
                          {r.l ? <FeatureLink $wide={r.w}>{r.n}</FeatureLink> : <FeatureName $wide={r.w}>{r.n}</FeatureName>}
                          <HelpMark $wide={r.w}>?</HelpMark>
                        </FeatureCell>
                      </Td>
                      <Td><Val v={r.on} /></Td>
                      <Td $left={r.u !== "-"}>{r.u}</Td>
                      <Td><Val v={r.v} /></Td>
                      <Td><Val v={r.d} /></Td>
                      <Td><Val v={r.e} /></Td>
                    </Row>
                  ))}
                </tbody>
              </Table>
              <EditButton>編集</EditButton>
            </Main>
          </Body>
        </Frame>
      </Page>
    </>
  );
}
